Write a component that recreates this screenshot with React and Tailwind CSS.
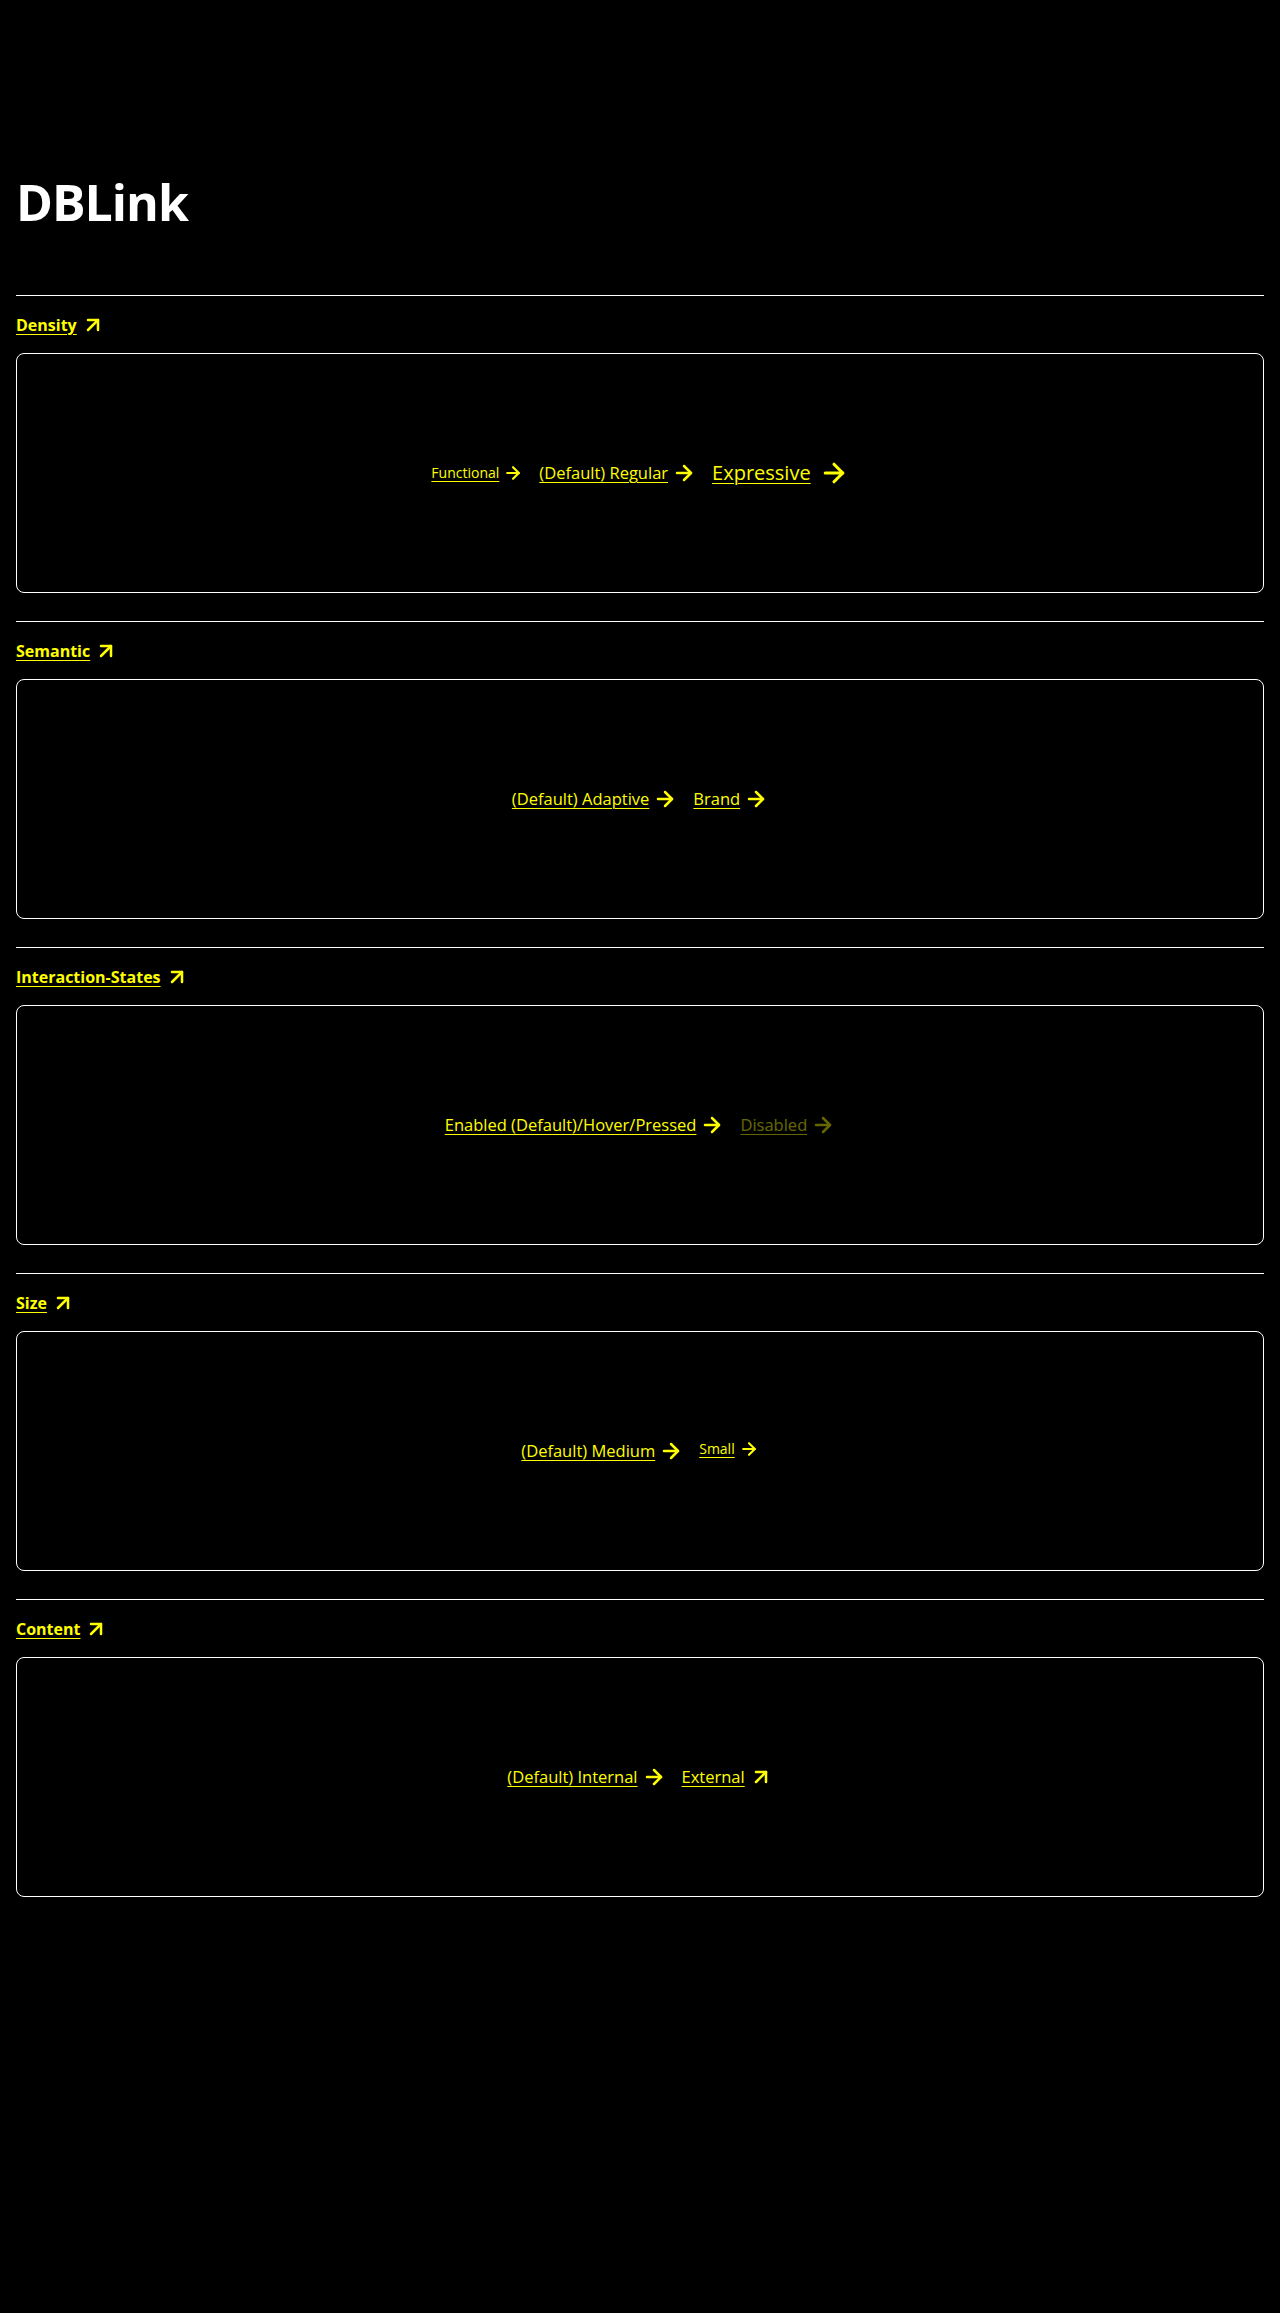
import React from "react";
import { ArrowRight, ArrowUpRight } from "lucide-react";

const Y = "text-[#ffff00]";

function HeaderLink({ label }) {
  return (
    <a href="#" className={`inline-flex items-center gap-1 ${Y} font-bold text-[16px] leading-6 underline underline-offset-[3px]`}>
      <span>{label}</span>
      <ArrowUpRight size={24} strokeWidth={2.5} className="no-underline" />
    </a>
  );
}

function DLink({ label, size = "md", disabled = false, external = false, extra = "" }) {
  const cfg = {
    sm: { text: "text-[14px]", icon: 20, gap: "gap-1" },
    md: { text: "text-[16.5px]", icon: 24, gap: "gap-1" },
    lg: { text: "text-[20px]", icon: 30, gap: "gap-2" },
  }[size];
  const Icon = external ? ArrowUpRight : ArrowRight;
  return (
    <a
      href="#"
      className={`inline-flex items-center ${cfg.gap} ${Y} ${cfg.text} leading-6 ${disabled ? "opacity-40" : ""} ${extra}`}
    >
      <span className="underline underline-offset-[3px] decoration-1">{label}</span>
      <Icon size={cfg.icon} strokeWidth={2.5} />
    </a>
  );
}

function Section({ title, children }) {
  return (
    <section className="border-t border-white pt-[17px] pb-[28px]">
      <HeaderLink label={title} />
      <div className="mt-4 h-[240px] rounded-lg border border-white flex items-center justify-center gap-4">
        {children}
      </div>
    </section>
  );
}

export default function App() {
  return (
    <div className="min-h-[2313px] bg-black px-4 text-white" style={{ fontFamily: '"Open Sans", "Noto Sans", sans-serif' }}>
      <h1 className="pt-[172px] text-[50px] font-bold leading-[60px] tracking-[-1px]">DBLink</h1>
      <div className="mt-[63px]">
        <Section title="Density">
          <DLink label="Functional" size="sm" />
          <DLink label="(Default) Regular" size="md" />
          <DLink label="Expressive" size="lg" />
        </Section>
        <Section title="Semantic">
          <DLink label="(Default) Adaptive" />
          <DLink label="Brand" />
        </Section>
        <Section title="Interaction-States">
          <DLink label="Enabled (Default)/Hover/Pressed" />
          <DLink label="Disabled" disabled />
        </Section>
        <Section title="Size">
          <DLink label="(Default) Medium" />
          <DLink label="Small" size="sm" extra="mb-[5px]" />
        </Section>
        <Section title="Content">
          <DLink label="(Default) Internal" />
          <DLink label="External" external />
        </Section>
      </div>
    </div>
  );
}
